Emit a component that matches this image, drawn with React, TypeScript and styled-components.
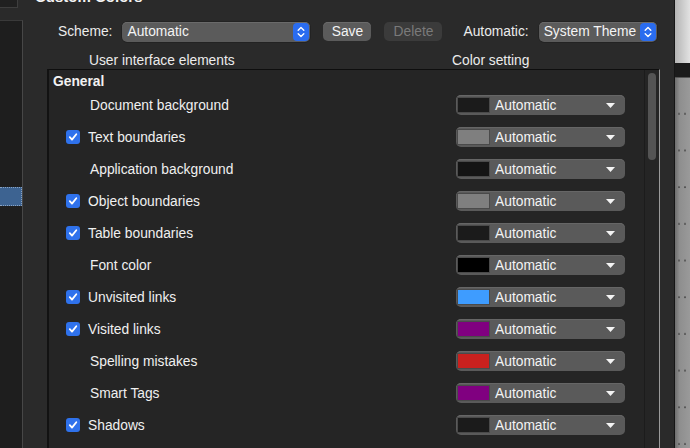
import styled, { createGlobalStyle } from "styled-components";

const GlobalStyle = createGlobalStyle`
  html, body {
    margin: 0;
    padding: 0;
    background: #2a2a2a;
  }
  body {
    font-family: "Liberation Sans", Arial, sans-serif;
    color: #f2f2f2;
  }
`;

const Page = styled.div`
  display: flex;
  width: 690px;
  height: 448px;
  overflow: hidden;
  background: #2a2a2a;
  font-size: 13.8px;
`;

const LeftColumn = styled.div`
  width: 23px;
  flex-shrink: 0;
  display: flex;
  flex-direction: column;
`;

const TopBox = styled.div`
  width: 18px;
  height: 8px;
  box-sizing: border-box;
  background: #202020;
  border: 1px solid #3e3e3e;
  border-top: none;
  border-left: none;
`;

const SidePanel = styled.div`
  margin-top: 12px;
  flex: 1;
  display: flex;
  flex-direction: column;
  background: #1e1e1e;
  border-top: 1px solid #3a3a3a;
  border-right: 1px solid #474747;
  padding-top: 166px;
`;

const SideSelected = styled.div`
  height: 19px;
  box-sizing: border-box;
  background: #3d6391;
  border: 1px dotted #8aa4c4;
  border-left: none;
`;

const Dialog = styled.div`
  flex: 1;
  display: flex;
  flex-direction: column;
  min-width: 0;
`;

const Title = styled.div`
  margin: -12px 0 0 12px;
  height: 17px;
  font-weight: bold;
  font-size: 15px;
  line-height: 17px;
  color: #f4f4f4;
`;

const SchemeRow = styled.div`
  display: flex;
  align-items: center;
  margin-top: 16px;
  padding-left: 35px;
  height: 21px;
`;

const Label = styled.span<{ $gap: number; $lead?: number }>`
  margin-left: ${(p) => p.$lead ?? 0}px;
  margin-right: ${(p) => p.$gap}px;
  color: #ececec;
`;

const Combo = styled.div<{ $width: number }>`
  width: ${(p) => p.$width}px;
  height: 20px;
  box-sizing: border-box;
  display: flex;
  align-items: center;
  justify-content: space-between;
  background: #5b5b5b;
  border-radius: 5px;
  box-shadow: inset 0 1px 0 #6a6a6a, 0 0 0 0.5px #1c1c1c;
  padding: 0 1px 0 5px;
  color: #f4f4f4;
`;

const ComboButton = styled.div`
  width: 16px;
  height: 18px;
  border-radius: 4px;
  background: #2a6cef;
  display: flex;
  align-items: center;
  justify-content: center;
`;

const PushButton = styled.div<{ $width: number; $disabled?: boolean }>`
  width: ${(p) => p.$width}px;
  height: 19px;
  margin-left: 13px;
  border-radius: 5px;
  display: flex;
  align-items: center;
  justify-content: center;
  background: ${(p) => (p.$disabled ? "#3b3b3b" : "#5b5b5b")};
  color: ${(p) => (p.$disabled ? "#7a7a7a" : "#f4f4f4")};
  box-shadow: ${(p) => (p.$disabled ? "none" : "inset 0 1px 0 #6a6a6a")};
`;

const HeaderRow = styled.div`
  display: flex;
  height: 16px;
  margin-top: 11px;
  line-height: 16px;
  color: #ececec;
`;

const HeaderCell = styled.div<{ $width: number }>`
  width: ${(p) => p.$width}px;
`;

const TableBox = styled.div`
  margin: 0 0 0 24px;
  width: 613px;
  flex: 1;
  display: flex;
  box-sizing: border-box;
  background: #252525;
  border-top: 1px solid #0e0e0e;
  border-left: 2px solid #121212;
  border-right: 1px solid #9a9a9a;
  min-height: 0;
`;

const TableBody = styled.div`
  flex: 1;
  display: flex;
  flex-direction: column;
`;

const GroupTitle = styled.div`
  height: 19px;
  display: flex;
  align-items: flex-end;
  padding-left: 4px;
  font-weight: bold;
  line-height: 14px;
`;

const Row = styled.div`
  height: 32px;
  flex-shrink: 0;
  display: flex;
  align-items: center;
  padding-left: 17px;
`;

const ItemLabel = styled.div<{ $indent: number }>`
  width: 390px;
  flex-shrink: 0;
  padding-left: ${(p) => p.$indent}px;
  box-sizing: border-box;
  display: flex;
  align-items: center;
  gap: 8px;
  color: #f0f0f0;
`;

const Check = styled.div`
  width: 14px;
  height: 14px;
  border-radius: 3px;
  background: #2f72ec;
  display: flex;
  align-items: center;
  justify-content: center;
`;

const ColorBox = styled.div`
  width: 169px;
  height: 20px;
  flex-shrink: 0;
  box-sizing: border-box;
  border-radius: 5px;
  background: #5a5a5a;
  box-shadow: inset 0 1px 0 #666;
  display: flex;
  align-items: center;
  padding: 0 10px 0 1px;
`;

const Swatch = styled.div<{ $color: string }>`
  width: 33px;
  height: 16px;
  box-sizing: border-box;
  background: ${(p) => p.$color};
  border: 1px solid #4a4a4a;
  margin-right: 5px;
`;

const ColorText = styled.span`
  flex: 1;
  color: #f4f4f4;
`;

const ScrollTrack = styled.div`
  width: 15px;
  flex-shrink: 0;
  box-sizing: border-box;
  border-left: 1px solid #1c1c1c;
  padding: 3px 3px 0 3px;
`;

const Thumb = styled.div`
  height: 87px;
  border-radius: 4px;
  background: #545454;
`;

const RightEdge = styled.div`
  width: 15px;
  flex-shrink: 0;
  display: flex;
  flex-direction: column;
  border-left: 1px solid #161616;
`;

const EdgeTop = styled.div`
  height: 63px;
  background: linear-gradient(to right, #b4b4b4, #e2e2e2);
`;

const EdgeBand = styled.div`
  height: 14px;
  background: #1b1b1b;
  border-bottom: 1px solid #555;
`;

const EdgeBody = styled.div`
  flex: 1;
  background-color: #8a8a8a;
  background-image:
    radial-gradient(circle at 4px 36px, #555 0.8px, transparent 1.3px),
    radial-gradient(circle at 10px 36px, #555 0.8px, transparent 1.3px),
    linear-gradient(to right, #6e6e6e, #8e8e8e 30%, #9a9a9a);
  background-size: 15px 36.7px, 15px 36.7px, 100% 100%;
  background-repeat: repeat-y, repeat-y, no-repeat;
`;

const Chevrons = () => (
  <svg width="8" height="12" viewBox="0 0 8 12">
    <path
      d="M1.2 4.2 L4 1.6 L6.8 4.2 M1.2 7.8 L4 10.4 L6.8 7.8"
      stroke="#fff"
      strokeWidth="1.4"
      fill="none"
      strokeLinecap="round"
      strokeLinejoin="round"
    />
  </svg>
);

const Tick = () => (
  <svg width="10" height="10" viewBox="0 0 10 10">
    <path
      d="M1.8 5.2 L4 7.6 L8.3 2.2"
      stroke="#fff"
      strokeWidth="1.8"
      fill="none"
      strokeLinecap="round"
      strokeLinejoin="round"
    />
  </svg>
);

const DownArrow = () => (
  <svg width="9" height="5" viewBox="0 0 9 5">
    <path d="M0 0 L9 0 L4.5 5 Z" fill="#f4f4f4" />
  </svg>
);

const items: { label: string; checked: boolean; color: string }[] = [
  { label: "Document background", checked: false, color: "#1b1b1b" },
  { label: "Text boundaries", checked: true, color: "#7f7f7f" },
  { label: "Application background", checked: false, color: "#141414" },
  { label: "Object boundaries", checked: true, color: "#7f7f7f" },
  { label: "Table boundaries", checked: true, color: "#1b1b1b" },
  { label: "Font color", checked: false, color: "#000000" },
  { label: "Unvisited links", checked: true, color: "#3e9cff" },
  { label: "Visited links", checked: true, color: "#800080" },
  { label: "Spelling mistakes", checked: false, color: "#c9211e" },
  { label: "Smart Tags", checked: false, color: "#800080" },
  { label: "Shadows", checked: true, color: "#1b1b1b" },
];

export default function App() {
  return (
    <>
      <GlobalStyle />
      <Page>
        <LeftColumn>
          <TopBox />
          <SidePanel>
            <SideSelected />
          </SidePanel>
        </LeftColumn>
        <Dialog>
          <Title>Custom Colors</Title>
          <SchemeRow>
            <Label $gap={10}>Scheme:</Label>
            <Combo $width={188}>
              <span>Automatic</span>
              <ComboButton>
                <Chevrons />
              </ComboButton>
            </Combo>
            <PushButton $width={48}>Save</PushButton>
            <PushButton $width={58} $disabled>
              Delete
            </PushButton>
            <Label $gap={10} $lead={21}>
              Automatic:
            </Label>
            <Combo $width={118}>
              <span>System Theme</span>
              <ComboButton>
                <Chevrons />
              </ComboButton>
            </Combo>
          </SchemeRow>
          <HeaderRow>
            <HeaderCell $width={66} />
            <HeaderCell $width={363}>User interface elements</HeaderCell>
            <HeaderCell $width={120}>Color setting</HeaderCell>
          </HeaderRow>
          <TableBox>
            <TableBody>
              <GroupTitle>General</GroupTitle>
              {items.map((it) => (
                <Row key={it.label}>
                  <ItemLabel $indent={it.checked ? 0 : 24}>
                    {it.checked && (
                      <Check>
                        <Tick />
                      </Check>
                    )}
                    <span>{it.label}</span>
                  </ItemLabel>
                  <ColorBox>
                    <Swatch $color={it.color} />
                    <ColorText>Automatic</ColorText>
                    <DownArrow />
                  </ColorBox>
                </Row>
              ))}
            </TableBody>
            <ScrollTrack>
              <Thumb />
            </ScrollTrack>
          </TableBox>
        </Dialog>
        <RightEdge>
          <EdgeTop />
          <EdgeBand />
          <EdgeBody />
        </RightEdge>
      </Page>
    </>
  );
}
